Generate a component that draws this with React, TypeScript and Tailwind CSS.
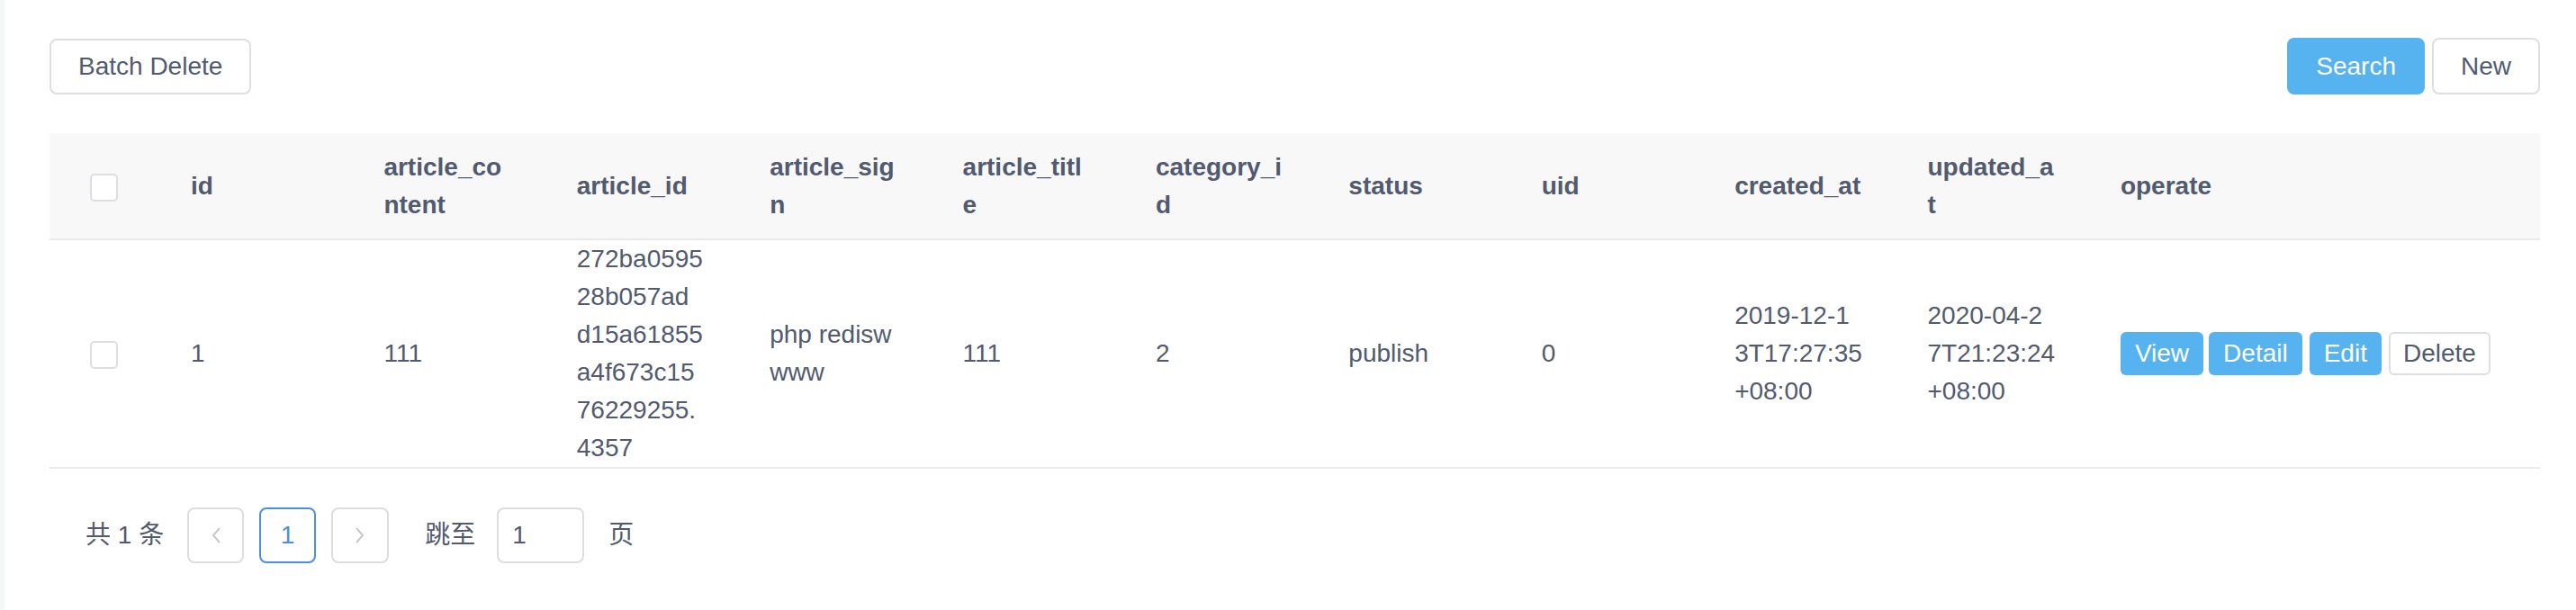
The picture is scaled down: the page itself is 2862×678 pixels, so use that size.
import React from 'react';

const headers: string[][] = [
  ['id'],
  ['article_co', 'ntent'],
  ['article_id'],
  ['article_sig', 'n'],
  ['article_titl', 'e'],
  ['category_i', 'd'],
  ['status'],
  ['uid'],
  ['created_at'],
  ['updated_a', 't'],
];

const row: string[][] = [
  ['1'],
  ['111'],
  ['272ba0595', '28b057ad', 'd15a61855', 'a4f673c15', '76229255.', '4357'],
  ['php redisw', 'www'],
  ['111'],
  ['2'],
  ['publish'],
  ['0'],
  ['2019-12-1', '3T17:27:35', '+08:00'],
  ['2020-04-2', '7T21:23:24', '+08:00'],
];

function Checkbox() {
  return <span className="inline-block w-[31px] h-[31px] rounded-[5px] border-2 border-[#dcdee2] bg-white align-middle" />;
}

function Lines({ lines }: { lines: string[] }) {
  return (
    <div>
      {lines.map((l, i) => (
        <div key={i} className="whitespace-nowrap">{l}</div>
      ))}
    </div>
  );
}

function Chevron({ dir }: { dir: 'left' | 'right' }) {
  return (
    <svg width="12" height="20" viewBox="0 0 12 20" fill="none" stroke="#c5c8ce" strokeWidth="2">
      {dir === 'left' ? <path d="M10 2 L3 10 L10 18" /> : <path d="M2 2 L9 10 L2 18" />}
    </svg>
  );
}

export default function App() {
  const font = { fontFamily: '"Liberation Sans", "Noto Sans CJK SC", Arial, sans-serif' };

  return (
    <div className="flex min-h-[678px] bg-white text-[#515a6e]" style={font}>
      <div className="w-[5px] shrink-0 bg-[#f5f7f9]" />
      <div className="flex-1 pl-[50px] pr-[40px] pt-[42px]">
        {/* toolbar */}
        <div className="flex items-center justify-between text-[28px]">
          <button className="h-[62px] px-[30px] rounded-[8px] border-2 border-[#dcdee2] bg-white">Batch Delete</button>
          <div className="flex items-center gap-[8px]">
            <button className="h-[63px] px-[32px] rounded-[8px] bg-[#56b3ef] text-white">Search</button>
            <button className="h-[63px] px-[30px] rounded-[8px] border-2 border-[#dcdee2] bg-white">New</button>
          </div>
        </div>

        {/* table */}
        <table className="mt-[43px] w-full table-fixed border-collapse text-[28px] leading-[42px]">
          <colgroup>
            <col className="w-[121px]" />
            {headers.map((_, i) => (
              <col key={i} className="w-[214.4px]" />
            ))}
            <col />
          </colgroup>
          <thead>
            <tr className="bg-[#f8f8f9]">
              <th className="h-[118px] border-b-2 border-[#e8eaec] text-center align-middle">
                <Checkbox />
              </th>
              {headers.map((h, i) => (
                <th key={i} className="px-[36px] border-b-2 border-[#e8eaec] text-left align-middle font-bold">
                  <Lines lines={h} />
                </th>
              ))}
              <th className="px-[36px] border-b-2 border-[#e8eaec] text-left align-middle font-bold">operate</th>
            </tr>
          </thead>
          <tbody>
            <tr>
              <td className="h-[254px] border-b-2 border-[#e8eaec] text-center align-middle">
                <Checkbox />
              </td>
              {row.map((c, i) => (
                <td key={i} className="px-[36px] border-b-2 border-[#e8eaec] align-middle">
                  <Lines lines={c} />
                </td>
              ))}
              <td className="px-[36px] border-b-2 border-[#e8eaec] align-middle">
                <div className="flex items-center">
                  <button className="h-[48px] px-[16px] rounded-[6px] bg-[#56b3ef] text-white mr-[6px]">View</button>
                  <button className="h-[48px] px-[16px] rounded-[6px] bg-[#56b3ef] text-white mr-[8px]">Detail</button>
                  <button className="h-[48px] px-[16px] rounded-[6px] bg-[#56b3ef] text-white mr-[8px]">Edit</button>
                  <button className="h-[48px] px-[14px] rounded-[6px] border-2 border-[#dcdee2] bg-white">Delete</button>
                </div>
              </td>
            </tr>
          </tbody>
        </table>

        {/* pagination */}
        <div className="mt-[43px] flex items-center pl-[40px] text-[28px]">
          <span className="mr-[26px] whitespace-pre">共 1 条</span>
          <span className="w-[63px] h-[62px] rounded-[8px] border-2 border-[#dcdee2] flex items-center justify-center mr-[17px]">
            <Chevron dir="left" />
          </span>
          <span className="w-[63px] h-[62px] rounded-[8px] border-2 border-[#4a8fe0] text-[#4a8fe0] flex items-center justify-center mr-[17px]">1</span>
          <span className="w-[64px] h-[62px] rounded-[8px] border-2 border-[#dcdee2] flex items-center justify-center mr-[40px]">
            <Chevron dir="right" />
          </span>
          <span className="mr-[24px]">跳至</span>
          <span className="w-[97px] h-[62px] rounded-[8px] border-2 border-[#dcdee2] flex items-center pl-[15px] mr-[27px]">1</span>
          <span>页</span>
        </div>
      </div>
    </div>
  );
}
